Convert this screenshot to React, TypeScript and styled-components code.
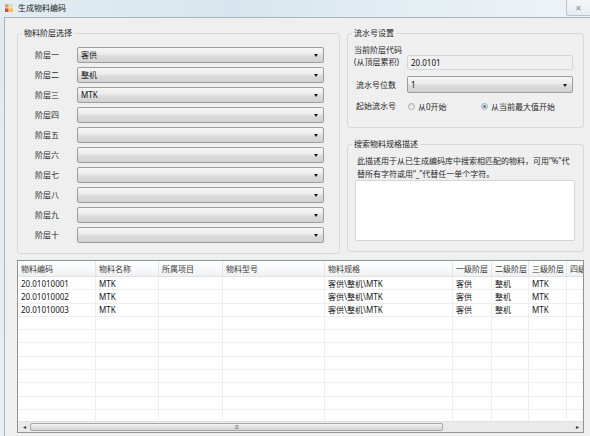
import styled, { createGlobalStyle } from "styled-components";

const GlobalStyle = createGlobalStyle`
  html, body {
    margin: 0;
    padding: 0;
    background: #e9eff3;
  }
  * {
    box-sizing: border-box;
  }
`;

const levels = ["一", "二", "三", "四", "五", "六", "七", "八", "九", "十"];
const levelValues = ["客供", "整机", "MTK"];

const columns = [
  "物料编码",
  "物料名称",
  "所属项目",
  "物料型号",
  "物料规格",
  "一级阶层",
  "二级阶层",
  "三级阶层",
  "四级阶层",
];

const rows = [
  ["20.01010001", "MTK", "", "", "客供\\整机\\MTK", "客供", "整机", "MTK", ""],
  ["20.01010002", "MTK", "", "", "客供\\整机\\MTK", "客供", "整机", "MTK", ""],
  ["20.01010003", "MTK", "", "", "客供\\整机\\MTK", "客供", "整机", "MTK", ""],
];

const App = () => {
  const emptyRows = Array.from({ length: 9 }, () => Array(9).fill(""));
  const allRows = [...rows, ...emptyRows];

  return (
    <>
      <GlobalStyle />
      <Window>
        <TitleBar>
          <AppIcon viewBox="0 0 9 9">
            <rect x="0" y="0" width="4" height="4" fill="#e8a33a" />
            <rect x="5" y="0" width="4" height="4" fill="#d9d9d9" />
            <rect x="0" y="5" width="4" height="4" fill="#d94b2b" />
            <rect x="5" y="5" width="4" height="4" fill="#f2c230" />
          </AppIcon>
          <Title>生成物料编码</Title>
          <CloseButton>✕</CloseButton>
        </TitleBar>
        <Body>
          <TopArea>
            <GroupBox>
              <Legend>物料阶层选择</Legend>
              <LevelList>
                {levels.map((n, i) => (
                  <LevelRow key={n}>
                    <FieldLabel>阶层{n}</FieldLabel>
                    <Combo>
                      <ComboText>{levelValues[i] ?? ""}</ComboText>
                      <Arrow />
                    </Combo>
                  </LevelRow>
                ))}
              </LevelList>
            </GroupBox>

            <RightColumn>
              <GroupBox>
                <Legend>流水号设置</Legend>
                <SerialGrid>
                  <StackLabel>
                    <span>当前阶层代码</span>
                    <span>(从顶层累积)</span>
                  </StackLabel>
                  <ReadOnlyBox>20.0101</ReadOnlyBox>
                  <FieldLabel>流水号位数</FieldLabel>
                  <Combo $height={17}>
                    <ComboText>1</ComboText>
                    <Arrow />
                  </Combo>
                  <FieldLabel>起始流水号</FieldLabel>
                  <RadioRow>
                    <RadioItem $width={73}>
                      <RadioDot />
                      从0开始
                    </RadioItem>
                    <RadioItem>
                      <RadioDot $checked />
                      从当前最大值开始
                    </RadioItem>
                  </RadioRow>
                </SerialGrid>
              </GroupBox>

              <GroupBox>
                <Legend>搜索物料规格描述</Legend>
                <SearchArea>
                  <Hint>
                    此描述用于从已生成编码库中搜索相匹配的物料，可用“%”代
                    <br />
                    替所有字符或用“_”代替任一单个字符。
                  </Hint>
                  <TextArea />
                </SearchArea>
              </GroupBox>
            </RightColumn>
          </TopArea>

          <DataGrid>
            <HeaderRow>
              {columns.map((c) => (
                <HeaderCell key={c}>{c}</HeaderCell>
              ))}
            </HeaderRow>
            <RowsArea>
              {allRows.map((r, ri) => (
                <DataRow key={ri}>
                  {r.map((v, ci) => (
                    <Cell key={ci}>{v}</Cell>
                  ))}
                </DataRow>
              ))}
            </RowsArea>
            <HScroll>
              <ScrollArrow>◂</ScrollArrow>
              <Track>
                <Thumb>
                  <Grip>III</Grip>
                </Thumb>
              </Track>
              <ScrollArrow>▸</ScrollArrow>
            </HScroll>
          </DataGrid>
        </Body>
      </Window>
    </>
  );
};

export default App;

const Window = styled.div`
  width: 590px;
  height: 436px;
  overflow: hidden;
  display: flex;
  flex-direction: column;
  font-family: "Noto Sans", "Noto Sans CJK SC", sans-serif;
  font-size: 8px;
  color: #1e1e1e;
  background: linear-gradient(180deg, #dfeaf1 0%, #e8f0f5 100%);
`;

const TitleBar = styled.div`
  height: 17px;
  flex: none;
  display: flex;
  align-items: center;
  padding-left: 5px;
  background: linear-gradient(90deg, #e2ecf2 0%, #d7e6ee 40%, #e6eff4 75%, #eef3f6 100%);
`;

const AppIcon = styled.svg`
  width: 8px;
  height: 8px;
  margin-top: -1px;
`;

const Title = styled.div`
  margin-left: 5px;
  font-size: 8px;
  line-height: 12px;
  color: #1a1a1a;
  margin-top: -1px;
`;

const CloseButton = styled.div`
  margin-left: auto;
  align-self: flex-start;
  width: 24px;
  height: 16px;
  display: flex;
  align-items: center;
  justify-content: center;
  font-size: 8px;
  color: #8a8a8a;
  background: linear-gradient(180deg, #f4f7f9 0%, #e6ecf0 100%);
  border: 1px solid #b9c4cc;
  border-top: none;
  border-right: none;
  border-radius: 0 0 0 3px;
`;

const Body = styled.div`
  flex: 1;
  margin-left: 4px;
  background: #efefef;
  border-top: 1px solid #a9b4bc;
  border-left: 1px solid #a9b4bc;
  padding: 10px 5px 0 12px;
  display: flex;
  flex-direction: column;
`;

const TopArea = styled.div`
  display: grid;
  grid-template-columns: 323px 237px;
  column-gap: 7px;
`;

const GroupBox = styled.fieldset`
  margin: 0;
  padding: 0;
  border: 1px solid #d6d9dc;
  border-radius: 3px;
  min-width: 0;
`;

const Legend = styled.legend`
  margin-left: 4px;
  padding: 0 2px;
  font-size: 8px;
  line-height: 10px;
  color: #1e1e1e;
`;

const LevelList = styled.div`
  display: flex;
  flex-direction: column;
  gap: 4px;
  padding: 9px 15px 10px 17px;
`;

const LevelRow = styled.div`
  display: flex;
  align-items: center;
  height: 16px;
`;

const FieldLabel = styled.div`
  width: 42px;
  flex: none;
  font-size: 8px;
  line-height: 12px;
  color: #2a2a2a;
`;

const Combo = styled.div<{ $height?: number }>`
  position: relative;
  flex: 1;
  height: ${(p) => p.$height ?? 16}px;
  display: flex;
  align-items: center;
  padding-left: 3px;
  border: 1px solid #9d9d9d;
  border-radius: 2px;
  background: linear-gradient(180deg, #f6f6f6 0%, #ebebeb 45%, #dcdcdc 55%, #d2d2d2 100%);
`;

const ComboText = styled.span`
  font-size: 8px;
  line-height: 12px;
  color: #111;
`;

const Arrow = styled.span`
  position: absolute;
  right: 5px;
  top: 50%;
  margin-top: -1px;
  width: 0;
  height: 0;
  border-left: 2.5px solid transparent;
  border-right: 2.5px solid transparent;
  border-top: 3px solid #1a1a1a;
`;

const RightColumn = styled.div`
  display: flex;
  flex-direction: column;
  gap: 11px;
`;

const SerialGrid = styled.div`
  display: grid;
  grid-template-columns: 53px 166px;
  grid-template-rows: 26px 17px 14px;
  row-gap: 6px;
  align-items: center;
  padding: 6px 10px 14px 6px;

  & > :nth-child(5) {
    padding-left: 2px;
  }
  & > :nth-child(3) {
    padding-left: 2px;
  }
`;

const StackLabel = styled.div`
  display: flex;
  flex-direction: column;
  align-self: stretch;
  font-size: 8px;
  line-height: 12px;
  color: #2a2a2a;
  white-space: nowrap;
`;

const ReadOnlyBox = styled.div`
  align-self: end;
  height: 15px;
  display: flex;
  align-items: center;
  padding-left: 3px;
  border: 1px solid #d3d6d9;
  border-radius: 2px;
  background: #f0f0f0;
  font-size: 8px;
  color: #111;
`;

const RadioRow = styled.div`
  display: flex;
  align-items: center;
  padding-left: 1px;
  margin-top: 1px;
`;

const RadioItem = styled.label<{ $width?: number }>`
  display: flex;
  align-items: center;
  gap: 3px;
  width: ${(p) => (p.$width ? `${p.$width}px` : "auto")};
  font-size: 8px;
  line-height: 12px;
  color: #2a2a2a;
`;

const RadioDot = styled.span<{ $checked?: boolean }>`
  width: 7px;
  height: 7px;
  border-radius: 50%;
  border: 1px solid #a7a7a7;
  background: ${(p) =>
    p.$checked
      ? "radial-gradient(circle, #2f6fb5 0%, #4d8bd0 35%, #e6e6e6 45%, #f7f7f7 100%)"
      : "linear-gradient(180deg, #dcdcdc 0%, #f8f8f8 100%)"};
`;

const SearchArea = styled.div`
  display: flex;
  flex-direction: column;
  padding: 5px 8px 10px 7px;
`;

const Hint = styled.div`
  padding-left: 2px;
  font-size: 8px;
  line-height: 13px;
  color: #2a2a2a;
  white-space: nowrap;
`;

const TextArea = styled.div`
  height: 61px;
  margin-top: 0;
  background: #ffffff;
  border: 1px solid #d3d6d9;
  border-radius: 1px;
`;

const DataGrid = styled.div`
  margin-top: 6px;
  width: 567px;
  height: 173px;
  border: 1px solid #8f9396;
  background: #ffffff;
  display: flex;
  flex-direction: column;
  overflow: hidden;
`;

const gridColumns = "78px 63px 64px 102px 128px 39px 37px 38px 60px";

const HeaderRow = styled.div`
  display: grid;
  grid-template-columns: ${gridColumns};
  height: 16px;
  flex: none;
  background: linear-gradient(180deg, #ffffff 0%, #f7f8f9 60%, #eef0f2 100%);
  border-bottom: 1px solid #dfe2e5;
`;

const HeaderCell = styled.div`
  display: flex;
  align-items: center;
  padding-left: 3px;
  font-size: 8px;
  color: #3a3a3a;
  white-space: nowrap;
  overflow: hidden;
  border-right: 1px solid #e3e5e7;
`;

const RowsArea = styled.div`
  flex: 1;
  overflow: hidden;
`;

const DataRow = styled.div`
  display: grid;
  grid-template-columns: ${gridColumns};
  height: 13.3px;
  border-bottom: 1px solid #eeeeee;
`;

const Cell = styled.div`
  display: flex;
  align-items: center;
  padding-left: 3px;
  font-size: 8px;
  color: #151515;
  white-space: nowrap;
  overflow: hidden;
  border-right: 1px solid #eeeeee;
`;

const HScroll = styled.div`
  height: 11px;
  flex: none;
  display: flex;
  align-items: stretch;
  background: #eaeaea;
  border-top: 1px solid #e2e2e2;
`;

const ScrollArrow = styled.div`
  width: 12px;
  display: flex;
  align-items: center;
  justify-content: center;
  font-size: 6px;
  color: #333;
`;

const Track = styled.div`
  flex: 1;
  display: flex;
  align-items: stretch;
  padding: 1px 0;
`;

const Thumb = styled.div`
  width: 413px;
  display: flex;
  align-items: center;
  justify-content: center;
  border: 1px solid #a8a8a8;
  border-radius: 2px;
  background: linear-gradient(180deg, #f3f3f3 0%, #e2e2e2 50%, #d4d4d4 100%);
`;

const Grip = styled.span`
  font-size: 5px;
  letter-spacing: -0.5px;
  color: #777;
`;
